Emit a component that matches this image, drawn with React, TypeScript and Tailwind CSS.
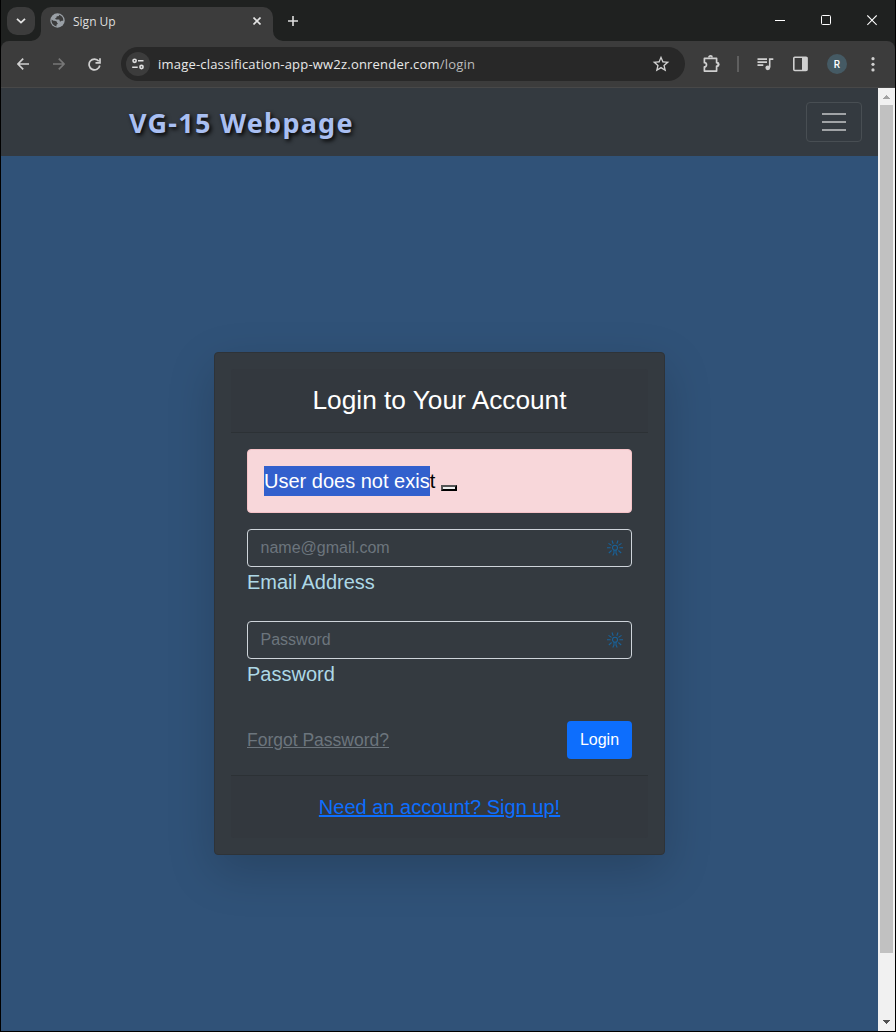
import React from 'react';
import { MdStarOutline } from 'react-icons/md';

function TabStrip() {
  return (
    <div className="flex h-[41px] shrink-0 items-end bg-[#1f2120]">
      <div className="mb-[6px] ml-[6px] flex size-7 items-center justify-center rounded-[10px] bg-[#3c3c3c]">
        <svg width="10" height="6" viewBox="0 0 10 6" fill="none" stroke="#e3e3e3" strokeWidth="1.8"><path d="M1 .8 5 4.6 9 .8" /></svg>
      </div>
      <svg className="-ml-1" width="10" height="10" viewBox="0 0 10 10" fill="#3c3c3c"><path d="M10 0v10H0A10 10 0 0 0 10 0" /></svg>
      <div className="flex h-[34px] w-[232px] items-center rounded-t-[10px] bg-[#3c3c3c] pl-[9px] pb-[6px]">
        <svg className="-mt-px" width="15" height="15" viewBox="0 0 15 15">
          <circle cx="7.5" cy="7.5" r="7.2" fill="#9aa0a6" />
          <path d="M9.1 1.7c.1 1.2-.5 1.6-1.7 1.6-.8 0-.9.5-.9 1.3 0 .6-1.2.5-1.3 1-.1.6.3.8 1.2.8h2.2c.8 0 1 .4 1 1 0 .8.3 1 .9 1 .7 0 .8-.6 1.6-.6h1.2A6 6 0 0 0 9.1 1.7M1.6 6.5c1.4 1.4 2.3 1.2 3.7 1.5 1.3.2 1.7.8 1.7 1.5 0 .6.8.5.8 1.1 0 .9-1.2.7-1.3 1.5l-.1 1.3A6 6 0 0 1 1.6 6.5" fill="#3c3c3c" />
        </svg>
        <span className="ml-2 flex-1 pt-[2px] text-[12px] leading-4 text-[#dfdfdf]">Sign Up</span>
        <svg className="mr-3" width="8" height="8" viewBox="0 0 8 8" stroke="#e3e3e3" strokeWidth="1.6"><path d="m.5.5 7 7m0-7-7 7" /></svg>
      </div>
      <svg width="10" height="10" viewBox="0 0 10 10" fill="#3c3c3c"><path d="M0 0v10h10A10 10 0 0 1 0 0" /></svg>
      <svg className="mb-[15px] ml-[5px]" width="10" height="10" viewBox="0 0 10 10" stroke="#dedede" strokeWidth="1.6"><path d="M5 0v10M0 5h10" /></svg>
      <div className="mb-[15px] ml-auto mr-[18px] flex items-center gap-[36px]">
        <svg width="10" height="11" viewBox="0 0 10 11" shapeRendering="crispEdges"><path d="M0 5h10v1H0z" fill="#fff" /></svg>
        <svg width="10" height="11" viewBox="0 0 10 11" fill="none" stroke="#fff"><rect x=".5" y=".5" width="9" height="9" rx="1" /></svg>
        <svg width="10" height="11" viewBox="0 0 10 11" stroke="#fff" strokeWidth="1.1"><path d="m.3.5 9.4 9.4m0-9.4-9.4 9.4" /></svg>
      </div>
    </div>
  );
}

function Toolbar() {
  return (
    <div className="shrink-0 bg-[#1f2120]">
      <div className="flex h-[47px] items-center rounded-t-[8px] border-b border-[#484848] bg-[#3c3c3c]">
        <svg className="ml-4" width="12" height="12" viewBox="0 0 12 12" fill="none" stroke="#d0d0d0" strokeWidth="1.7"><path d="M12 6H1M6.2.7.9 6l5.3 5.3" /></svg>
        <svg className="ml-6" width="12" height="12" viewBox="0 0 12 12" fill="none" stroke="#777" strokeWidth="1.7"><path d="M0 6h11M5.8.7 11.1 6l-5.3 5.3" /></svg>
        <svg className="ml-[23px]" width="13" height="13" viewBox="0 0 13 13" fill="none" stroke="#d0d0d0" strokeWidth="1.7"><path d="M11.8 7.5A5.4 5.4 0 1 1 10.8 3.2M12 .3v4.5H7.5" /></svg>
        <div className="ml-5 flex h-[34px] w-[564px] items-center rounded-full bg-[#282828] pl-[5px] pr-[14px]">
          <div className="flex size-6 items-center justify-center rounded-full bg-[#3c3c3c]">
            <svg width="14" height="12" viewBox="0 0 14 12" fill="none" stroke="#e0e0e0" strokeWidth="1.6">
              <circle cx="3.6" cy="2.8" r="1.6" /><path d="M7 2.8h5.5M1.2 9.2h5.5" /><circle cx="10.5" cy="9" r="1.6" />
            </svg>
          </div>
          <span className="ml-2 flex-1 whitespace-nowrap text-[13px] leading-5 tracking-[0.2px] text-[#e8e8e8]">image-classification-app-ww2z.onrender.com<span className="text-[#bcbcbc]">/login</span></span>
          <MdStarOutline className="size-5 text-[#d0d0d0]" />
        </div>
        <svg className="ml-[18px]" width="18" height="18" viewBox="0 0 18 18" fill="none" stroke="#d0d0d0" strokeWidth="1.7"><path d="M1.4 3.4h12.2v4.3a1.6 1.6 0 0 1 0 3.4v5H1.4v-4.2a2.1 2.1 0 0 0 0-4.2z" strokeLinejoin="round" /><path d="M5.9 2.5a1.6 1.6 0 0 1 3.2 0M14.2 7.8a1.6 1.6 0 0 1 0 3.2" /></svg>
        <div className="ml-4 h-4 w-[2px] bg-[#5f5f5f]" />
        <svg className="ml-[18px]" width="17" height="14" viewBox="0 0 17 14" fill="none" stroke="#d0d0d0" strokeWidth="1.6"><path d="M.5 2.1h9.5M.5 5.1h9.5M.5 8.1h5.8M16.3 2.1h-3.6v8.4" /><circle cx="10.8" cy="10.8" r="2.4" fill="#d0d0d0" stroke="none" /></svg>
        <svg className="ml-[19px]" width="15" height="16" viewBox="0 0 15 16"><rect x=".8" y="1.3" width="13.2" height="13.2" rx="1" fill="none" stroke="#d0d0d0" strokeWidth="1.6" /><path d="M9 1h5.3v13.5H9z" fill="#d0d0d0" /></svg>
        <div className="ml-[19px] flex size-5 items-center justify-center rounded-full bg-[#455a64] font-['Roboto',sans-serif] text-[10px] font-medium text-white">R</div>
        <svg className="ml-[24px]" width="4" height="16" viewBox="0 0 4 16" fill="#d0d0d0"><circle cx="2" cy="2.7" r="1.6" /><circle cx="2" cy="8.3" r="1.6" /><circle cx="2" cy="13.9" r="1.6" /></svg>
      </div>
    </div>
  );
}

function PasswordManagerIcon() {
  return (
    <svg width="16" height="16" viewBox="0 0 16 16" fill="none" stroke="#18639b" strokeWidth="1.05">
      <circle cx="8" cy="7.7" r="2.5" />
      <path d="M0 7.8h3.6M12.4 7.8H16M1.5 3.4l3 2M11.5 5.4l3-2M1.8 13l2.8-2.5M11.4 10.5l2.8 2.5M5 .5l1.2 3.2M11 .5 9.8 3.7M7 10.1v3l-1.2 2.4M9 10.1v3l1.2 2.4" />
    </svg>
  );
}

function Field({ placeholder, label }: { placeholder: string; label: string }) {
  return (
    <div className="mb-[24px] h-[68px]">
      <div className="flex h-[38px] items-center justify-between rounded-[4px] border border-[#ced4da] pl-[12.5px] pr-2">
        <span className="text-[16px] leading-6 text-[#6c757d]">{placeholder}</span>
        <PasswordManagerIcon />
      </div>
      <div className="text-[20px] leading-[30px] text-[#add8e6]">{label}</div>
    </div>
  );
}

function LoginCard() {
  return (
    <div className="h-[503px] w-[451px] rounded-[4px] border border-[#2e3338] bg-[#343a40] p-4 font-['Liberation_Sans',Arial,sans-serif] shadow-[0_16px_48px_rgba(0,0,0,0.175)]">
      <h3 className="h-16 rounded-t-[3px] border-b border-[#2c3135] bg-[#33383e] text-center text-[26.25px] leading-[62px] text-white">Login to Your Account</h3>
      <div className="h-[342px] p-4">
        <div className="mb-4 flex h-16 items-center rounded-[4px] border border-[#f5c2c7] bg-[#f8d7da] pl-4 text-[20px] leading-[30px] text-black">
          <span className="whitespace-nowrap"><span className="bg-[#3260cd] py-[4px] text-white">User does not exis</span>t</span>
          <span className="ml-[6px] mt-[14px] h-[6px] w-4 border-2 border-b-black border-l-[#555] border-r-black border-t-[#555] bg-[#efefef]" />
        </div>
        <Field placeholder="name@gmail.com" label="Email Address" />
        <Field placeholder="Password" label="Password" />
        <div className="mt-8 flex h-[38px] items-center justify-between">
          <a className="text-[17.5px] text-[#6c757d] underline">Forgot Password?</a>
          <button className="h-[38px] w-[65px] rounded-[4px] bg-[#0d6efd] text-[16px] text-white">Login</button>
        </div>
      </div>
      <div className="h-[63px] rounded-b-[3px] border-t border-[#2c3135] bg-[#33383e] text-center text-[20px] leading-[62px] text-[#0d6efd]"><a className="underline">Need an account? Sign up!</a></div>
    </div>
  );
}

export default function App() {
  return (
    <div className="flex h-[1032px] w-[896px] flex-col overflow-hidden border-x border-b border-black bg-[#305278] font-['Open_Sans','Noto_Sans',sans-serif]">
      <TabStrip />
      <Toolbar />
      <div className="flex min-h-0 flex-1">
        <main className="flex min-w-0 flex-1 flex-col">
          <nav className="flex h-[68px] shrink-0 items-center justify-between bg-[#343a40] pl-32 pr-4">
            <span className="whitespace-nowrap pt-[3px] font-['Noto_Sans',sans-serif] text-[27px] font-bold tracking-[1.25px] text-[#a9bff2] [text-shadow:2px_2px_4px_#000]">VG-15 Webpage</span>
            <div className="flex h-10 w-14 flex-col items-center justify-center gap-[6px] rounded-[4px] border border-[#484e53]">
              <div className="h-[2px] w-6 bg-[#a0a3a6]" /><div className="h-[2px] w-6 bg-[#a0a3a6]" /><div className="h-[2px] w-6 bg-[#a0a3a6]" />
            </div>
          </nav>
          <div className="flex flex-1 justify-center pt-[196px]"><LoginCard /></div>
        </main>
        <div className="flex w-[17px] shrink-0 flex-col items-center bg-[#f1f1f1]">
          <svg width="17" height="17" viewBox="0 0 17 17" shapeRendering="crispEdges"><path d="M5 11h7L8.5 7z" fill="#a3a3a3" /></svg>
          <div className="h-[848px] w-[13px] bg-[#c1c1c1]" />
          <svg className="mt-auto" width="17" height="17" viewBox="0 0 17 17" shapeRendering="crispEdges"><path d="M5 6h7l-3.5 4z" fill="#505050" /></svg>
        </div>
      </div>
    </div>
  );
}
